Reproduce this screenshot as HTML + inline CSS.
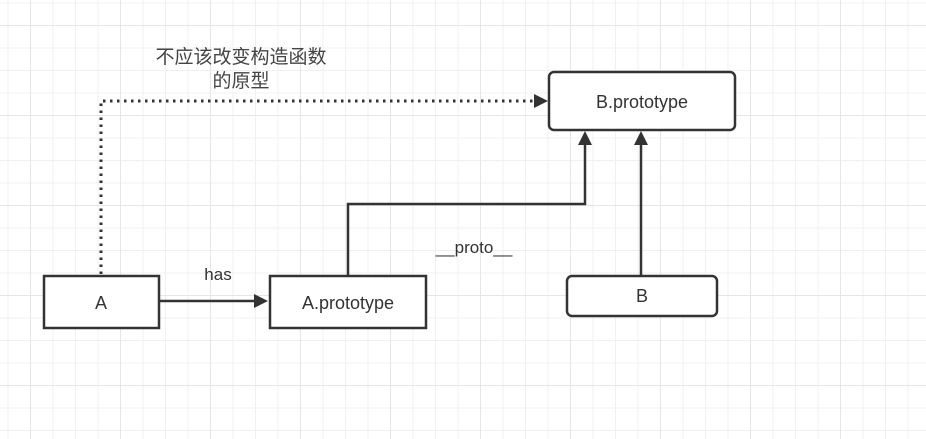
<!DOCTYPE html><html><head><style>
body{margin:0;width:926px;height:439px;overflow:hidden;background:#fff;
background-image:linear-gradient(#e6e6e6 1px,transparent 1px),linear-gradient(90deg,#e6e6e6 1px,transparent 1px),linear-gradient(#f0f0f0 1px,transparent 1px),linear-gradient(90deg,#f0f0f0 1px,transparent 1px);
background-size:90px 90px,90px 90px,22.5px 22.5px,22.5px 22.5px;background-position:0 25px,30px 0,0 2.5px,7.5px 0;
font-family:"Liberation Sans","Noto Sans CJK SC",sans-serif;}
</style></head><body>
<svg width="926" height="439" style="position:absolute;left:0;top:0" font-family="Liberation Sans, Noto Sans CJK SC, sans-serif">
<g stroke="#333" stroke-width="2.5" fill="none">
<path d="M101,274 V101 H534" stroke-dasharray="2.5,4.5" stroke-width="3"/>
<path d="M159,301 H254"/>
<path d="M348,276 V204 H585 V145"/>
<path d="M641,276 V145"/>
</g>
<g fill="#333"><path d="M254,294 L268,301 L254,308z"/><path d="M534,94 L548,101 L534,108z"/>
<path d="M578,145 L585,131 L592,145z"/><path d="M634,145 L641,131 L648,145z"/></g>
<g stroke="#333" stroke-width="2.5" fill="#fff">
<rect x="44" y="276" width="115" height="52"/>
<rect x="270" y="276" width="156" height="52"/>
<rect x="567" y="276" width="150" height="40" rx="5"/>
<rect x="549" y="72" width="186" height="58" rx="5"/>
</g>
<g fill="#333" font-size="18" text-anchor="middle">
<text x="101" y="309">A</text><text x="348" y="309">A.prototype</text>
<text x="642" y="302">B</text><text x="642" y="108">B.prototype</text>
<text x="218" y="280" font-size="17">has</text><text x="474" y="253" font-size="17">__proto__</text>
<text x="241" y="63" font-size="19" fill="#444">不应该改变构造函数</text><text x="241" y="87" font-size="19" fill="#444">的原型</text>
</g></svg>
</body></html>
